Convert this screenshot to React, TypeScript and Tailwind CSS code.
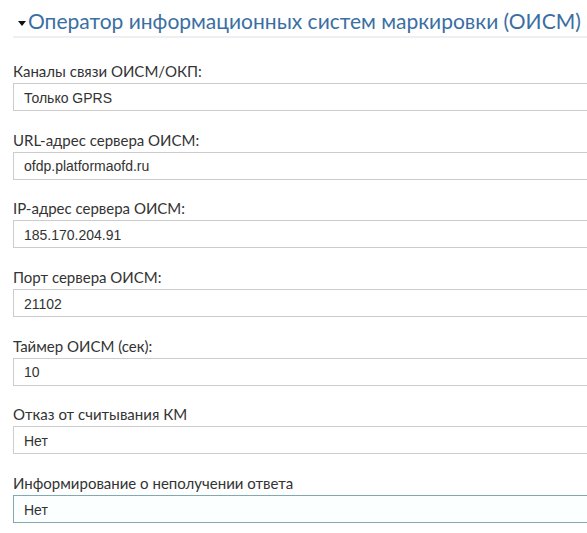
import React from "react";

type Field = {
  label: string;
  value: string;
  focused?: boolean;
};

const fields: Field[] = [
  { label: "Каналы связи ОИСМ/ОКП:", value: "Только GPRS" },
  { label: "URL-адрес сервера ОИСМ:", value: "ofdp.platformaofd.ru" },
  { label: "IP-адрес сервера ОИСМ:", value: "185.170.204.91" },
  { label: "Порт сервера ОИСМ:", value: "21102" },
  { label: "Таймер ОИСМ (сек):", value: "10" },
  { label: "Отказ от считывания КМ", value: "Нет" },
  { label: "Информирование о неполучении ответа", value: "Нет", focused: true },
];

const App: React.FC = () => {
  return (
    <div
      className="w-[587px] h-[533px] overflow-hidden bg-white"
      style={{ fontFamily: "Lato, 'Open Sans', sans-serif" }}
    >
      <div className="ml-[13px] flex items-center h-[38px] pt-[4px] border-b-2 border-[#efefef]">
        <svg width="8" height="5" viewBox="0 0 8 5" className="ml-[5px] mt-[6px]">
          <path d="M0 0 L8 0 L4 5 Z" fill="#111" />
        </svg>
        <h2 className="ml-[2px] text-[21px] leading-none text-[#3a6fa3] whitespace-nowrap">
          Оператор информационных систем маркировки (ОИСМ)
        </h2>
      </div>
      <div className="pl-[13px] pt-[23px]">
        {fields.map((f) => (
          <div key={f.label} className="mb-[18.7px]">
            <label className="block h-5 leading-5 text-[15px] text-[#333] mb-[2px]">
              {f.label}
            </label>
            <div
              className={
                f.focused
                  ? "w-[620px] h-[28px] border border-[#80aab0] bg-[#fbffff] pl-[10px] pt-[2px] flex items-center text-[14px] text-[#333]"
                  : "w-[620px] h-[28px] border border-[#cccccc] bg-white pl-[10px] pt-[2px] flex items-center text-[14px] text-[#333]"
              }
              style={{ fontFamily: "'Liberation Sans', Arial, sans-serif" }}
            >
              {f.value}
            </div>
          </div>
        ))}
      </div>
    </div>
  );
};

export default App;
